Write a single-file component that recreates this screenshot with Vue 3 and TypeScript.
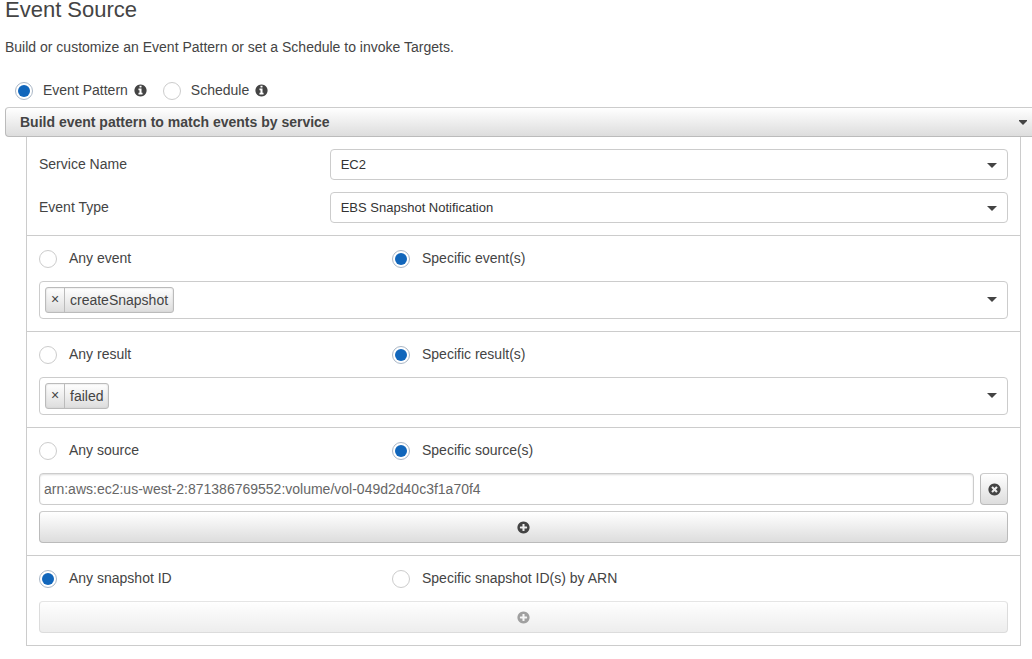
<script setup lang="ts">
import { ref } from 'vue'

interface FilterSection {
  id: string
  anyLabel: string
  specificLabel: string
  mode: 'any' | 'specific'
  tags?: string[]
  arns?: string[]
}

const disc =
  'q0 209-103 385.5t-279.5 279.5-385.5 103-385.5-103-279.5-279.5-103-385.5 103-385.5 279.5-279.5 385.5-103 385.5 103 279.5 279.5 103 385.5z'
const infoPath =
  'M1152 1376v-160q0-14-9-23t-23-9h-96v-512q0-14-9-23t-23-9h-320q-14 0-23 9t-9 23v160q0 14 9 23t23 9h96v320h-96q-14 0-23 9t-9 23v160q0 14 9 23t23 9h448q14 0 23-9t9-23zm-128-896v-160q0-14-9-23t-23-9h-192q-14 0-23 9t-9 23v160q0 14 9 23t23 9h192q14 0 23-9t9-23zm640 416' +
  disc
const plusPath =
  'M1344 960v-128q0-26-19-45t-45-19h-256v-256q0-26-19-45t-45-19h-128q-26 0-45 19t-19 45v256h-256q-26 0-45 19t-19 45v128q0 26 19 45t45 19h256v256q0 26 19 45t45 19h128q26 0 45-19t19-45v-256h256q26 0 45-19t19-45zm320-64' +
  disc
const timesPath =
  'M1277 1122q0-26-19-45l-181-181 181-181q19-19 19-45 0-27-19-46l-90-90q-19-19-46-19-26 0-45 19l-181 181-181-181q-19-19-45-19-27 0-46 19l-90 90q-19 19-19 46 0 26 19 45l181 181-181 181q-19 19-19 45 0 27 19 46l90 90q19 19 46 19 26 0 45-19l181-181 181 181q19 19 45 19 27 0 46-19l90-90q19-19 19-46zm387-226' +
  disc

const sourceKind = ref('pattern')
const sourceKinds = [
  { value: 'pattern', label: 'Event Pattern' },
  { value: 'schedule', label: 'Schedule' },
]

const selects = ref([
  { id: 'service', label: 'Service Name', value: 'EC2' },
  { id: 'type', label: 'Event Type', value: 'EBS Snapshot Notification' },
])

const sections = ref<FilterSection[]>([
  { id: 'event', anyLabel: 'Any event', specificLabel: 'Specific event(s)', mode: 'specific', tags: ['createSnapshot'] },
  { id: 'result', anyLabel: 'Any result', specificLabel: 'Specific result(s)', mode: 'specific', tags: ['failed'] },
  {
    id: 'source',
    anyLabel: 'Any source',
    specificLabel: 'Specific source(s)',
    mode: 'specific',
    arns: ['arn:aws:ec2:us-west-2:871386769552:volume/vol-049d2d40c3f1a70f4'],
  },
  { id: 'snapshot', anyLabel: 'Any snapshot ID', specificLabel: 'Specific snapshot ID(s) by ARN', mode: 'any', arns: [] },
])
</script>

<template>
  <main class="page">
    <h1>Event Source</h1>
    <p class="intro">Build or customize an Event Pattern or set a Schedule to invoke Targets.</p>

    <div class="kinds" role="radiogroup" aria-label="Event source">
      <div v-for="k in sourceKinds" :key="k.value" class="kind">
        <label class="choice">
          <input v-model="sourceKind" type="radio" name="kind" :value="k.value" />
          <span>{{ k.label }}</span>
        </label>
        <button type="button" class="info" :aria-label="'About ' + k.label">
          <svg class="icon" viewBox="80 80 1632 1632"><path :d="infoPath" /></svg>
        </button>
      </div>
    </div>

    <button type="button" class="bar">
      <span>Build event pattern to match events by service</span>
      <svg class="bar-caret" viewBox="0 0 8 5"><path d="M0 0h8v1l-4 4-4-4z" /></svg>
    </button>

    <div class="panel">
      <section class="section fields">
        <div v-for="s in selects" :key="s.id" class="field">
          <label :for="s.id">{{ s.label }}</label>
          <div class="select">
            <select :id="s.id" v-model="s.value">
              <option>{{ s.value }}</option>
            </select>
            <svg class="caret" viewBox="0 0 10 5"><path d="M0 0h10l-5 5z" /></svg>
          </div>
        </div>
      </section>

      <section v-for="s in sections" :key="s.id" class="section">
        <div class="modes">
          <label class="choice wide">
            <input v-model="s.mode" type="radio" :name="s.id" value="any" />
            <span>{{ s.anyLabel }}</span>
          </label>
          <label class="choice wide">
            <input v-model="s.mode" type="radio" :name="s.id" value="specific" />
            <span>{{ s.specificLabel }}</span>
          </label>
        </div>

        <div v-if="s.tags" class="tags">
          <span v-for="(t, i) in s.tags" :key="t" class="tag">
            <button type="button" :aria-label="'Remove ' + t" @click="s.tags.splice(i, 1)">×</button>
            <span>{{ t }}</span>
          </span>
          <button type="button" class="open" :aria-label="s.specificLabel">
            <svg viewBox="0 0 10 5"><path d="M0 0h10l-5 5z" /></svg>
          </button>
        </div>

        <div v-if="s.arns" class="arns">
          <div v-for="(_, i) in s.arns" :key="i" class="arn">
            <input v-model="s.arns[i]" type="text" :aria-label="s.specificLabel" />
            <button type="button" class="btn remove" aria-label="Remove" @click="s.arns.splice(i, 1)">
              <svg class="icon" viewBox="80 80 1632 1632"><path :d="timesPath" /></svg>
            </button>
          </div>
          <button type="button" class="btn" aria-label="Add" :disabled="s.mode === 'any'" @click="s.arns.push('')">
            <svg class="icon" viewBox="80 80 1632 1632"><path :d="plusPath" /></svg>
          </button>
        </div>
      </section>
    </div>
  </main>
</template>

<style>
body {
  background: #fff;
}
</style>

<style scoped>
.page {
  padding-left: 5px;
  color: #444;
  font: 14px/20px "Liberation Sans", Arial, sans-serif;
}
.page *,
.page {
  box-sizing: border-box;
}
button,
input,
select {
  margin: 0;
  color: inherit;
  font: inherit;
}
svg {
  display: block;
  fill: currentColor;
}
h1 {
  margin: 0 0 17px;
  font-size: 22px;
  line-height: 20px;
  font-weight: 400;
}
.intro {
  margin: 0 0 23px;
}
.icon {
  width: 13px;
  height: 13px;
}
.kinds {
  display: flex;
  gap: 16px;
  margin: 0 0 6px 10px;
}
.kind {
  display: flex;
  align-items: center;
  gap: 6px;
}
.info {
  padding: 0;
  border: 0;
  background: none;
}
.choice {
  display: flex;
  align-items: flex-start;
  gap: 10px;
  height: 21px;
}
.wide {
  gap: 12px;
}
input[type='radio'] {
  display: grid;
  place-items: center;
  flex: none;
  width: 18px;
  height: 18px;
  margin-top: 2px;
  border: 1px solid #ccc;
  border-radius: 50%;
  background: #fff;
  appearance: none;
}
input[type='radio']:checked {
  border-color: #aab7c6;
}
input[type='radio']:checked::before {
  width: 12px;
  height: 12px;
  border-radius: 50%;
  background: #16b;
  content: '';
}
.bar {
  display: flex;
  align-items: center;
  justify-content: space-between;
  width: 100%;
  height: 30px;
  padding: 0 5px 0 14px;
  border: 1px solid #bbb;
  border-top-color: #ccc;
  border-right: 0;
  border-radius: 4px 0 0 4px;
  background: linear-gradient(#fff, #ddd);
  font-weight: 700;
}
.bar-caret {
  width: 8px;
  height: 5px;
}
.panel {
  margin: 0 11px 0 21px;
  border: solid #ccc;
  border-width: 0 1px;
}
.section {
  padding: 12px;
  border-bottom: 1px solid #ccc;
}
.fields {
  display: grid;
  gap: 12px;
}
.field {
  display: grid;
  grid-template-columns: 30% 1fr;
}
.field label {
  padding-top: 5px;
}
.select {
  position: relative;
}
.select select {
  display: block;
  width: 100%;
  height: 31px;
  padding: 0 30px 0 10px;
  border: 1px solid #ccc;
  border-radius: 4px;
  background: #fff;
  color: #333;
  font-size: 13px;
  appearance: none;
}
.caret {
  position: absolute;
  top: 14px;
  right: 11px;
  width: 10px;
  height: 5px;
  pointer-events: none;
}
.modes {
  display: grid;
  grid-template-columns: 353fr 616fr;
  margin-bottom: 12px;
}
.tags {
  display: flex;
  gap: 5px;
  padding: 5px;
  border: 1px solid #ccc;
  border-radius: 4px;
}
.tag {
  display: flex;
  height: 26px;
  border: 1px solid #bbb;
  border-radius: 3px;
  background: linear-gradient(#fff, #ddd);
  box-shadow: inset 0 0 2px #ccc;
  line-height: 24px;
}
.tag button {
  width: 19px;
  padding: 0 0 2px;
  border: 0;
  border-right: 1px solid #bbb;
  background: none;
  line-height: 20px;
}
.tag span {
  padding: 0 5px;
}
.open {
  margin-left: auto;
  padding: 0 5px 2px;
  border: 0;
  background: none;
}
.open svg {
  width: 10px;
  height: 5px;
}
.arns {
  display: grid;
  gap: 6px;
}
.arn {
  display: flex;
  gap: 6px;
}
.arn input {
  flex: 1;
  min-width: 0;
  height: 32px;
  padding: 0 4px;
  border: 1px solid #ccc;
  border-radius: 4px;
  background: #fff;
  box-shadow: inset 0 1px 2px #ddd;
  color: #666;
}
.btn {
  display: flex;
  align-items: center;
  justify-content: center;
  height: 32px;
  padding: 0;
  border: 1px solid #bbb;
  border-top-color: #ccc;
  border-radius: 4px;
  background: linear-gradient(#fff, #ddd);
}
.btn:disabled {
  opacity: 0.5;
}
.remove {
  width: 28px;
}
</style>
